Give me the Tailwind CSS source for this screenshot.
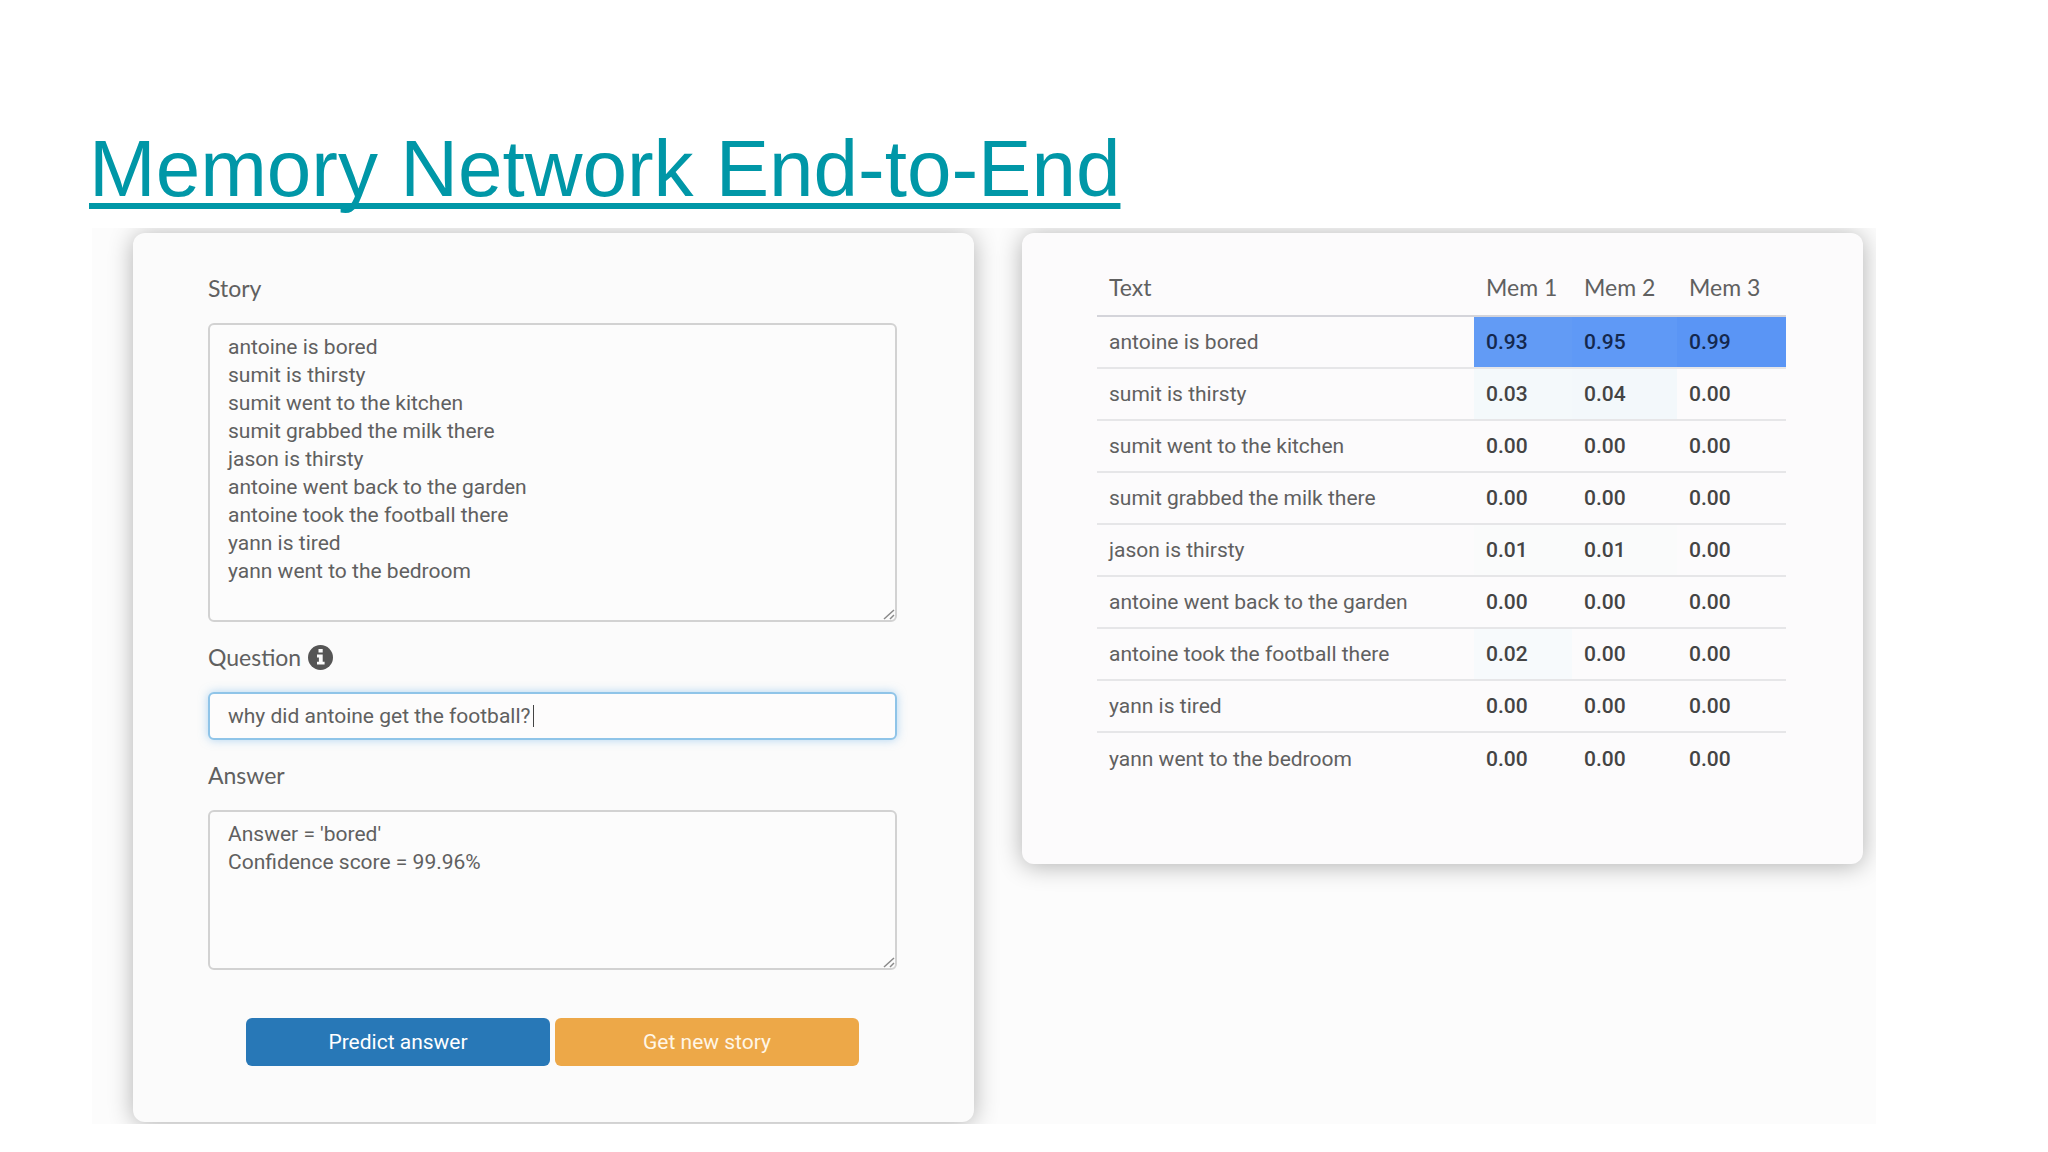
<!doctype html>
<html lang="en">
  <head>
    <meta charset="UTF-8" />
    <meta name="viewport" content="width=device-width, initial-scale=1.0" />
    <title>Memory Network End-to-End</title>
    <script src="https://cdn.jsdelivr.net/npm/@tailwindcss/browser@4"></script>
  </head>
  <body class="bg-white text-[#606060] font-['Roboto',sans-serif] text-[21px] leading-7">
    <main class="min-h-screen pt-[123px] pl-[92px] pr-[172px] pb-7">
      <h1 class="-ml-[3px] mb-[13px] font-['Liberation_Sans',Arial,sans-serif] text-[80px] leading-[92px]">
        <a href="#demo" class="text-[#0097a7] underline decoration-[6px] underline-offset-[7px] [text-decoration-skip-ink:none]">Memory Network End-to-End</a>
      </h1>

      <div id="demo" class="grid grid-cols-2 gap-12 items-start bg-[#fcfcfc] overflow-hidden pt-[5px] pb-[2px] pl-[41px] pr-[13px]">
        <form class="bg-[#fbfbfb] rounded-xl pl-[75px] pr-[77px] pt-[41px] pb-14 shadow-[0_2px_24px_rgba(0,0,0,0.3)]">
          <label for="story" class="block mb-[21px] font-['Lato',sans-serif] text-[23px]">Story</label>
          <div class="relative">
            <textarea id="story" class="block w-full h-[299px] resize-none overflow-hidden rounded-md border-2 border-[#d2d2d2] bg-[#fcfcfc] px-[18px] py-2">antoine is bored
sumit is thirsty
sumit went to the kitchen
sumit grabbed the milk there
jason is thirsty
antoine went back to the garden
antoine took the football there
yann is tired
yann went to the bedroom</textarea>
            <svg class="absolute right-[2px] bottom-[2px]" width="12" height="11" viewBox="0 0 12 11" fill="none" stroke="#8a8a8a" stroke-width="1.5">
              <path d="M1 10 11 1M7 10l4-4" />
            </svg>
          </div>

          <label for="question" class="flex items-center gap-[7px] my-[21px] font-['Lato',sans-serif] text-[23px]">
            Question
            <svg width="25" height="25" viewBox="0 0 25 25">
              <circle cx="12.5" cy="12.5" r="12.5" fill="#555" />
              <path fill="#fbfbfb" d="M10.5 4h4.2v3.6h-4.2zM9 9.6h5.7v7.2h1.9v2.8H9v-2.8h1.9v-4.4H9z" />
            </svg>
          </label>
          <div class="relative">
            <input id="question" type="text" value="why did antoine get the football?" class="block w-full h-12 rounded-md border-2 border-[#8fc4e8] bg-[#fdfcfc] px-[18px] outline-none shadow-[0_0_10px_rgba(102,175,233,0.5)]" />
            <span class="absolute left-[325px] top-[13px] w-px h-[22px] bg-[#444]"></span>
          </div>

          <label for="answer" class="block my-[21px] font-['Lato',sans-serif] text-[23px]">Answer</label>
          <div class="relative">
            <textarea id="answer" class="block w-full h-40 resize-none overflow-hidden rounded-md border-2 border-[#d2d2d2] bg-[#fcfcfc] px-[18px] py-2">Answer = 'bored'
Confidence score = 99.96%</textarea>
            <svg class="absolute right-[2px] bottom-[2px]" width="12" height="11" viewBox="0 0 12 11" fill="none" stroke="#8a8a8a" stroke-width="1.5">
              <path d="M1 10 11 1M7 10l4-4" />
            </svg>
          </div>

          <div class="grid grid-cols-2 gap-[5px] mt-12 px-[38px]">
            <button type="button" class="h-12 rounded-md bg-[#2878b7] text-white">Predict answer</button>
            <button type="button" class="h-12 rounded-md bg-[#eda848] text-[#fff6e6]">Get new story</button>
          </div>
        </form>

        <section class="bg-[#fcfbfc] rounded-xl pl-[75px] pr-[77px] pt-10 pb-20 shadow-[0_2px_24px_rgba(0,0,0,0.3)]">
          <table class="w-full table-fixed text-left">
            <colgroup>
              <col />
              <col class="w-[98px]" />
              <col class="w-[105px]" />
              <col class="w-[109px]" />
            </colgroup>
            <thead class="font-['Lato',sans-serif] text-[23px]">
              <tr class="border-b-2 border-[#d4d4da]">
                <th class="h-[43px] px-3 align-top font-normal">Text</th>
                <th class="px-3 align-top font-normal whitespace-nowrap">Mem 1</th>
                <th class="px-3 align-top font-normal whitespace-nowrap">Mem 2</th>
                <th class="px-3 align-top font-normal whitespace-nowrap">Mem 3</th>
              </tr>
            </thead>
            <tbody class="[&_td]:h-[52px] [&_td]:px-3 [&_td+td]:font-medium [&_td+td]:text-[#444] [&_tr+tr]:border-t-2 [&_tr+tr]:border-[#e6e6e8]">
              <tr>
                <td>antoine is bored</td>
                <td class="bg-[#629bf5]"><span class="text-[#14284e]">0.93</span></td>
                <td class="bg-[#5f99f6]"><span class="text-[#14284e]">0.95</span></td>
                <td class="bg-[#5a95f5]"><span class="text-[#14284e]">0.99</span></td>
              </tr>
              <tr>
                <td>sumit is thirsty</td>
                <td class="bg-[#f4f9fb]">0.03</td>
                <td class="bg-[#f3f8fb]">0.04</td>
                <td>0.00</td>
              </tr>
              <tr>
                <td>sumit went to the kitchen</td>
                <td>0.00</td>
                <td>0.00</td>
                <td>0.00</td>
              </tr>
              <tr>
                <td>sumit grabbed the milk there</td>
                <td>0.00</td>
                <td>0.00</td>
                <td>0.00</td>
              </tr>
              <tr>
                <td>jason is thirsty</td>
                <td class="bg-[#fafbfb]">0.01</td>
                <td class="bg-[#fafbfb]">0.01</td>
                <td>0.00</td>
              </tr>
              <tr>
                <td>antoine went back to the garden</td>
                <td>0.00</td>
                <td>0.00</td>
                <td>0.00</td>
              </tr>
              <tr>
                <td>antoine took the football there</td>
                <td class="bg-[#f7fafc]">0.02</td>
                <td>0.00</td>
                <td>0.00</td>
              </tr>
              <tr>
                <td>yann is tired</td>
                <td>0.00</td>
                <td>0.00</td>
                <td>0.00</td>
              </tr>
              <tr>
                <td>yann went to the bedroom</td>
                <td>0.00</td>
                <td>0.00</td>
                <td>0.00</td>
              </tr>
            </tbody>
          </table>
        </section>
      </div>
    </main>
  </body>
</html>
